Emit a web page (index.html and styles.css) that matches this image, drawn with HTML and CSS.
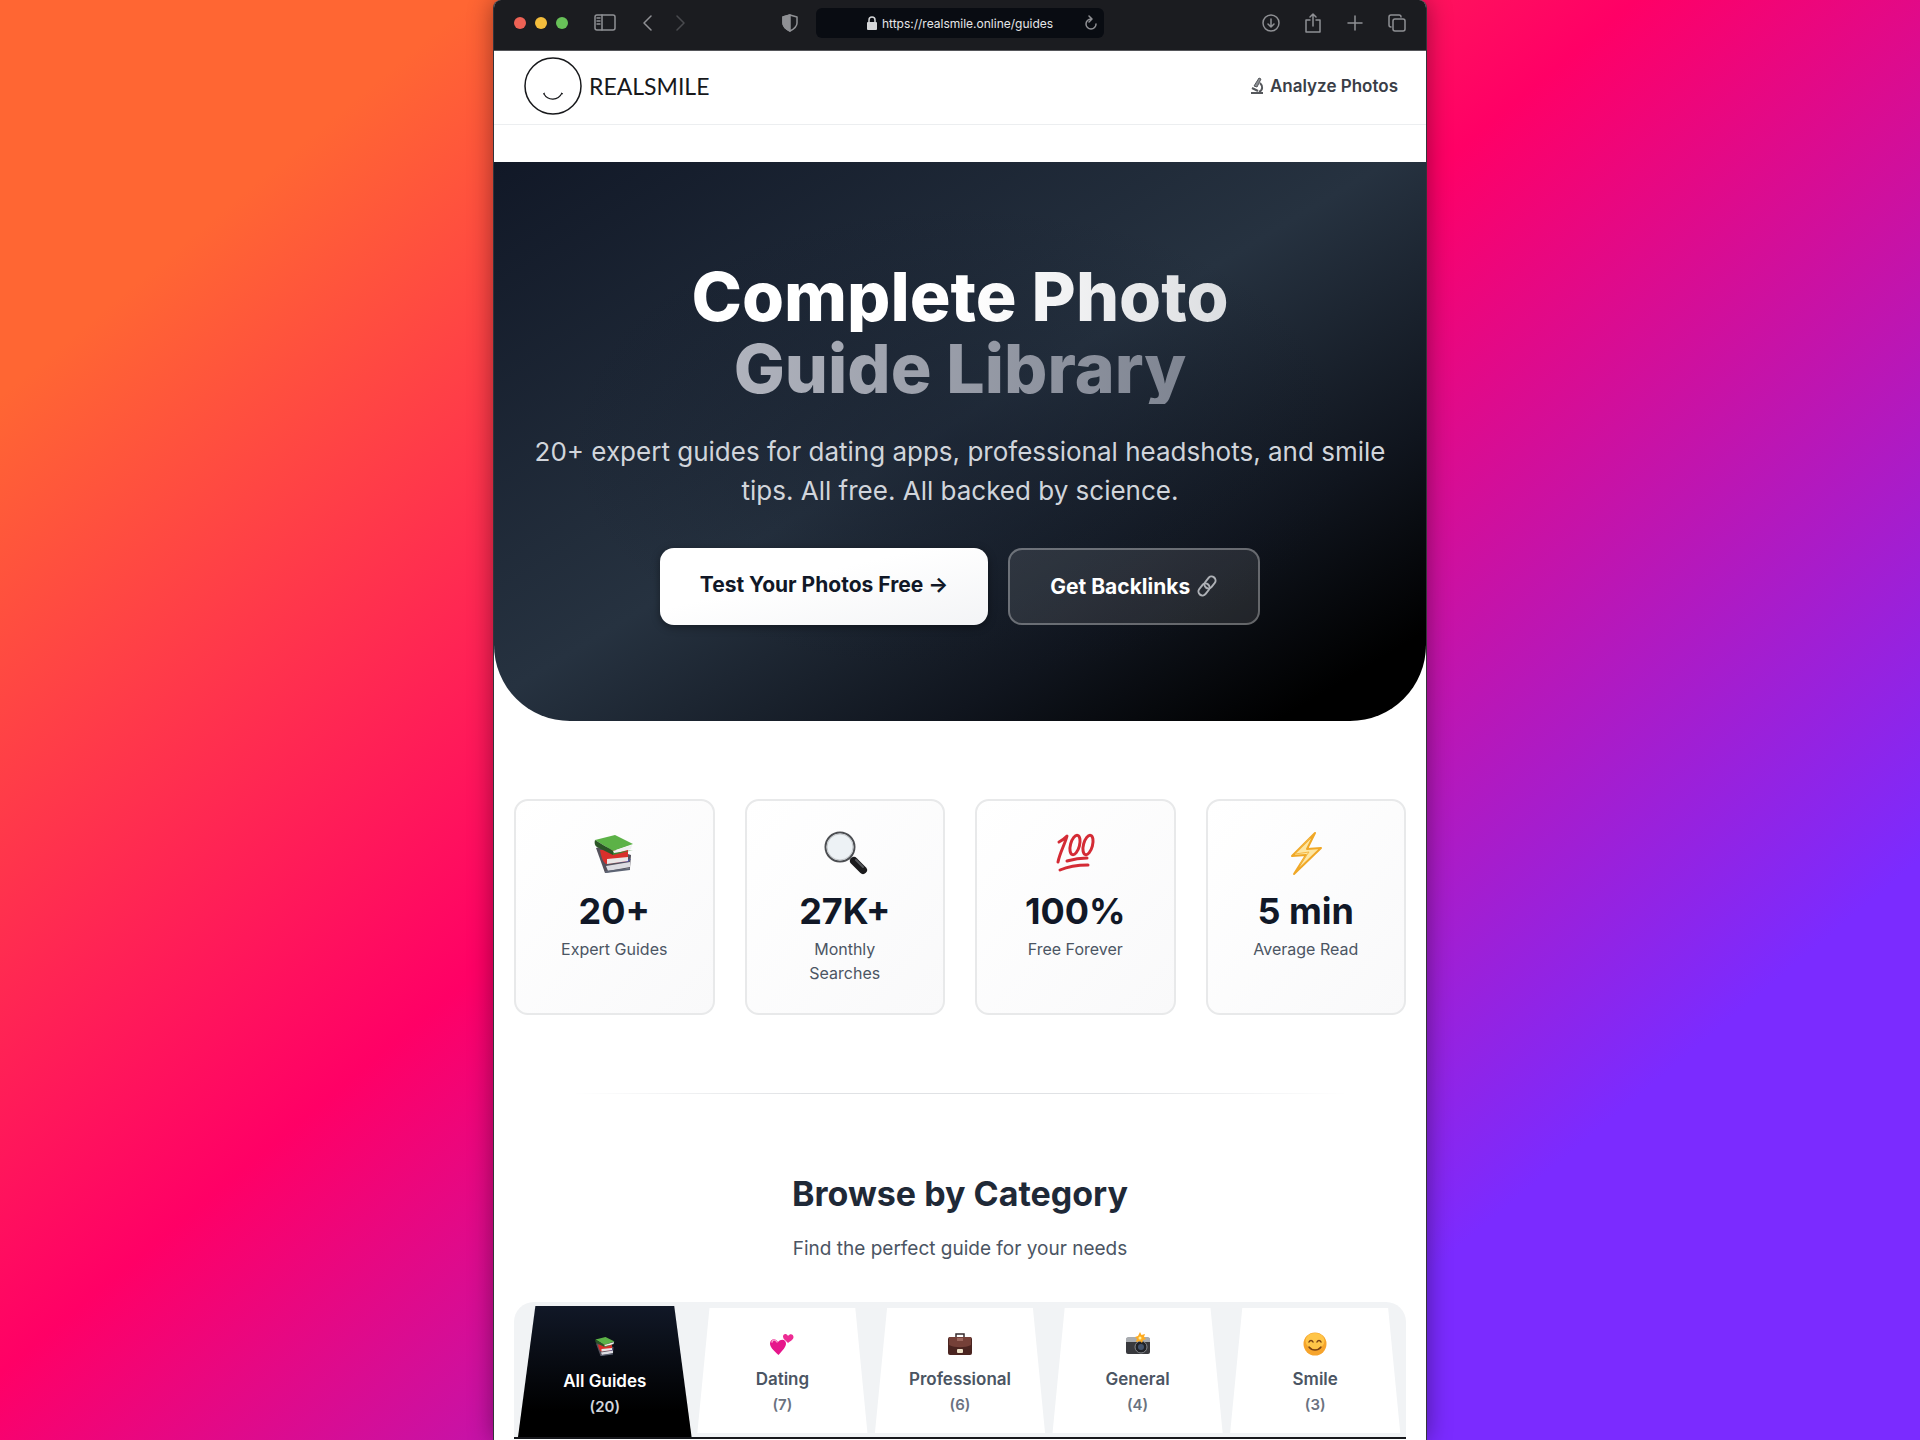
FILE: index.html
```html
<!DOCTYPE html>
<html lang="en">

<head>
    <meta charset="UTF-8">
    <meta name="viewport" content="width=device-width, initial-scale=1.0">
    <title>RealSmile - Guides</title>
    <link rel="stylesheet" href="styles.css">
</head>

<body>
    <!-- shared icons -->
    <svg class="sprite" aria-hidden="true">
        <symbol id="books" viewBox="0 0 48 48">
            <path d="M6 19l7-2 28 9-1 13-25 5z" fill="#55525c" />
            <path d="M16 37l24-4v5l-22 4z" fill="#dcdce2" />
            <path d="M14 34l24-1 3-3-25 3z" fill="#4d55a6" />
            <path d="M15 42l25-3v2l-24 3z" fill="#5d6474" />
            <path d="M10 21l28 0v11l-22 3c-4-3-5-9-6-14z" fill="#d92f2b" />
            <path d="M17 30l21-2v4l-21 3z" fill="#e9e6e6" />
            <path d="M5 11l20-5 18 9-20 7z" fill="#5cb247" />
            <path d="M5 11c-1 3 0 6 2 7l16 8v-4z" fill="#2b5526" />
            <path d="M23 22l19-6-1 4-17 5c-1-1-1-2-1-3z" fill="#efefef" />
            <path d="M43 15l-20 7v4l20-5-19 3-1-2z" fill="#3b8530" />
        </symbol>
        <symbol id="magnifier" viewBox="0 0 48 48">
            <path d="M28 28l5 5" stroke="#888" stroke-width="3" />
            <path d="M33 32l9 9" stroke="#1b1b1d" stroke-width="8" stroke-linecap="round" />
            <path d="M35 31l7 7" stroke="#55575b" stroke-width="2" stroke-linecap="round" />
            <circle cx="19" cy="18" r="14.500" fill="#edf2f5" stroke="#4c4e52" stroke-width="2" />
            <circle cx="19" cy="18" r="13" fill="none" stroke="#c4c8cb" />
        </symbol>
        <symbol id="hundred" viewBox="0 0 48 48">
            <g fill="none" stroke="#d42b35" stroke-linecap="round" stroke-linejoin="round">
                <path d="M8 13c4-2 6-4 8-6C14 15 9 23 7 33" stroke-width="3" />
                <ellipse cx="24" cy="16" rx="4.500" ry="10" transform="rotate(15 24 16)" stroke-width="3" />
                <ellipse cx="37" cy="16" rx="4.500" ry="10" transform="rotate(15 37 16)" stroke-width="3" />
                <path d="M16 32c7-2 13-3 20-3M9 41c9-4 18-5 28-5" stroke-width="3" />
            </g>
        </symbol>
        <symbol id="bolt" viewBox="0 0 48 48">
            <path d="M33 4L10 27l14-1-12 19 27-26-14 1z" fill="#fde6a3" stroke="#f0a827" stroke-width="2" stroke-linejoin="round" />
            <path d="M28 9L13 25l14-2-9 12" fill="none" stroke="#f5b945" stroke-width="1" />
        </symbol>
        <symbol id="hearts" viewBox="0 0 24 24">
            <path d="M8.500 23C3 18 0 15 0 11.500 0 7 5.500 5.500 8 10c3-4 8-2.500 8 1.500 0 3.500-3 6.500-7.500 11.500z" fill="#e6168b" />
            <path d="M18 11c-3-3-5-4-5-6.500C13 1.500 16.500 1 18 4c2-3 5.500-2 5.500 1 0 2.500-3 4-5.500 6z" fill="#ed2b93" />
            <path d="M2 10c1-3 4-2 5 0" stroke="#f99bcb" stroke-width="1.500" fill="none" stroke-linecap="round" />
        </symbol>
        <symbol id="briefcase" viewBox="0 0 24 24">
            <path d="M8 5V2h8v3" fill="none" stroke="#362b2d" stroke-width="1.500" />
            <rect x="0" y="5" width="24" height="18" rx="2" fill="#4a2420" />
            <path d="M1 5h22v8c-6 3-16 3-22 0z" fill="#754038" />
            <rect x="9" y="6" width="6" height="3" fill="#9b665c" />
            <rect x="9" y="17" width="6" height="4" rx="1" fill="#eee2c8" />
        </symbol>
        <symbol id="camera" viewBox="0 0 24 24">
            <rect y="6" width="24" height="16" rx="2" fill="#38393d" />
            <path d="M0 10V7c0-1 1-2 2-2h20c1 0 2 1 2 2v3z" fill="#a9acb0" />
            <circle cx="15" cy="15" r="6" fill="#202226" stroke="#85888d" />
            <circle cx="15" cy="15" r="3" fill="#43536b" />
            <path d="M14 0l1.500 3L19 2l-1 3 2 2-3 1-1 3-2-2-4 1 1-3-2-2 3-1z" fill="#ffab20" />
            <circle cx="14" cy="6" r="1.500" fill="#fff2a0" />
        </symbol>
        <symbol id="smiley" viewBox="0 0 24 24">
            <circle cx="12" cy="12" r="11.500" fill="#f6a42c" />
            <ellipse cx="12" cy="9" rx="9.500" ry="8" fill="#ffc548" />
            <path d="M6 10c1-2 3-2 4 0M14 10c1-2 3-2 4 0M6 15c3 4 9 4 12 0" fill="none" stroke="#7c4413" stroke-width="1.500" stroke-linecap="round" />
        </symbol>
    </svg>

    <div class="window">
        <div class="toolbar">
            <div class="toolbar-left">
                <div class="dots">
                    <span class="dot red"></span>
                    <span class="dot yellow"></span>
                    <span class="dot green"></span>
                </div>
                <button class="tool" aria-label="Sidebar">
                    <svg width="22" height="18" viewBox="0 0 22 18"><rect x="1" y="1" width="20" height="15" rx="2" /><path d="M8 1v15M3 4h3M3 7h3M3 10h3" /></svg>
                </button>
                <div class="history">
                    <button class="tool" aria-label="Back">
                        <svg width="10" height="16" viewBox="0 0 10 16"><path d="M9 1L2 8l7 7" /></svg>
                    </button>
                    <button class="tool dim" aria-label="Forward">
                        <svg width="10" height="16" viewBox="0 0 10 16"><path d="M1 1l7 7-7 7" /></svg>
                    </button>
                </div>
                <button class="tool shield" aria-label="Privacy report">
                    <svg width="16" height="18" viewBox="0 0 16 18"><path d="M8 1l7 2v6c0 4-3 6-7 8-4-2-7-4-7-8V3z" /><path class="solid" d="M8 1L1 3v6c0 4 3 6 7 8z" /></svg>
                </button>
            </div>
            <div class="address">
                <svg class="lock" width="10" height="14" viewBox="0 0 10 14"><rect y="6" width="10" height="8" rx="1" fill="#d5d6d8" /><path d="M2 7V4a3 3 0 0 1 6 0v3" fill="none" stroke="#d5d6d8" stroke-width="1.500" /></svg>
                <span>https://realsmile.online/guides</span>
                <button class="tool reload" aria-label="Reload">
                    <svg width="14" height="16" viewBox="0 0 14 16"><path d="M7 4a5 5 0 1 0 5 5M5 1l3 3-3 3" /></svg>
                </button>
            </div>
            <div class="toolbar-right">
                <button class="tool" aria-label="Downloads">
                    <svg width="18" height="20" viewBox="0 0 18 20"><circle cx="9" cy="10" r="8" /><path d="M9 6v8M6 11l3 3 3-3" /></svg>
                </button>
                <button class="tool" aria-label="Share">
                    <svg width="18" height="20" viewBox="0 0 18 20"><path d="M6 7H2v12h14V7h-4M9 13V1M6 4l3-3 3 3" /></svg>
                </button>
                <button class="tool" aria-label="New tab">
                    <svg width="18" height="20" viewBox="0 0 18 20"><path d="M9 3v14M2 10h14" /></svg>
                </button>
                <button class="tool" aria-label="Tabs">
                    <svg width="18" height="20" viewBox="0 0 18 20"><rect x="5" y="6" width="12" height="12" rx="2" /><path d="M3 14c-1 0-2-1-2-2V4c0-1 1-2 2-2h8c1 0 2 1 2 2" /></svg>
                </button>
            </div>
        </div>

        <header class="header">
            <a class="logo" href="#">
                <svg width="58" height="58" viewBox="0 0 58 58" fill="none" stroke="#17181b"><circle cx="29" cy="29" r="28" stroke-width="1.500" /><path d="M20 37c4 7 14 7 18-1" stroke-width="1.200" /><path d="M19 37l2-1M37 36l2 1" /></svg>
                REALSMILE
            </a>
            <a class="analyze" href="#">
                <svg width="14" height="18" viewBox="0 0 14 18" fill="none" stroke="#55585c"><path d="M9 1l2 1-4 8-3-1z" fill="#898d91" /><path d="M10 6c3 3 3 7-1 9M2 11l6 3M1 16h12" stroke-width="2" /></svg>
                Analyze Photos
            </a>
        </header>

        <main>
            <section class="hero">
                <h1><span class="line">Complete Photo</span> <span class="line muted">Guide Library</span></h1>
                <p>20+ expert guides for dating apps, professional headshots, and smile tips. All free. All backed by science.</p>
                <div class="hero-buttons">
                    <a class="btn btn-light" href="#">Test Your Photos Free →</a>
                    <a class="btn btn-glass" href="#">Get Backlinks
                        <svg width="22" height="24" viewBox="0 0 22 24" fill="none" stroke="#aeb1b6" stroke-width="2"><rect x="10" y="2" width="8" height="13" rx="4" transform="rotate(38 14 8.500)" /><rect x="4" y="9" width="8" height="13" rx="4" transform="rotate(38 8 15.500)" /></svg>
                    </a>
                </div>
            </section>

            <section class="stats">
                <div class="stat">
                    <svg><use href="#books" /></svg>
                    <div class="stat-number">20+</div>
                    <div class="stat-label">Expert Guides</div>
                </div>
                <div class="stat">
                    <svg><use href="#magnifier" /></svg>
                    <div class="stat-number">27K+</div>
                    <div class="stat-label">Monthly Searches</div>
                </div>
                <div class="stat">
                    <svg><use href="#hundred" /></svg>
                    <div class="stat-number">100%</div>
                    <div class="stat-label">Free Forever</div>
                </div>
                <div class="stat">
                    <svg><use href="#bolt" /></svg>
                    <div class="stat-number">5 min</div>
                    <div class="stat-label">Average Read</div>
                </div>
            </section>

            <section class="browse">
                <h2>Browse by Category</h2>
                <p>Find the perfect guide for your needs</p>
                <div class="tabs">
                    <button class="tab active">
                        <svg><use href="#books" /></svg>
                        <span class="tab-name">All Guides</span>
                        <span class="tab-count">(20)</span>
                    </button>
                    <button class="tab">
                        <svg><use href="#hearts" /></svg>
                        <span class="tab-name">Dating</span>
                        <span class="tab-count">(7)</span>
                    </button>
                    <button class="tab">
                        <svg><use href="#briefcase" /></svg>
                        <span class="tab-name">Professional</span>
                        <span class="tab-count">(6)</span>
                    </button>
                    <button class="tab">
                        <svg><use href="#camera" /></svg>
                        <span class="tab-name">General</span>
                        <span class="tab-count">(4)</span>
                    </button>
                    <button class="tab">
                        <svg><use href="#smiley" /></svg>
                        <span class="tab-name">Smile</span>
                        <span class="tab-count">(3)</span>
                    </button>
                </div>
            </section>
        </main>
    </div>
</body>

</html>
```
FILE: styles.css
```css
* {
    box-sizing: border-box;
}

body {
    font-family: Inter, "Liberation Sans", sans-serif;
    margin: 0;
    min-height: 100vh;
    background: linear-gradient(140deg, #ff6633 13%, #ff0066 45%, #7b2bff 81%);
    color: #111827;
}

a {
    color: inherit;
    text-decoration: none;
}

button {
    font-family: inherit;
    border: none;
    padding: 0;
    cursor: pointer;
}

.sprite {
    display: none;
}

.window {
    max-width: 934px;
    min-height: 100vh;
    margin: 0 auto;
    background-color: #fff;
    border: 1px solid #34343a;
    border-width: 0 1px;
    border-radius: 8px 8px 0 0;
    box-shadow: 0 0 24px rgba(0, 0, 0, 0.4);
    overflow: hidden;
}

/* browser toolbar */
.toolbar {
    display: grid;
    grid-template-columns: 1fr 288px 1fr;
    align-items: center;
    padding: 8px 20px 12px 20px;
    background-color: #1b1c20;
    border-bottom: 1px solid #55565a;
}

.toolbar-left,
.toolbar-right,
.dots,
.history {
    display: flex;
    align-items: center;
}

.toolbar-left {
    padding-right: 18px;
}

.dots {
    gap: 9px;
    margin-right: 26px;
}

.dot {
    width: 12px;
    height: 12px;
    border-radius: 50%;
}

.red {
    background-color: #ee6255;
}

.yellow {
    background-color: #f4bd3c;
}

.green {
    background-color: #68c158;
}

.history {
    gap: 24px;
    margin-left: 26px;
}

.tool {
    display: flex;
    background: none;
}

.tool svg {
    fill: none;
    stroke: #8f9094;
    stroke-width: 1.5;
    stroke-linecap: round;
    stroke-linejoin: round;
}

.tool .solid {
    fill: #8f9094;
}

.dim {
    opacity: 0.4;
}

.shield {
    margin-left: auto;
}

.address {
    display: flex;
    align-items: center;
    justify-content: center;
    position: relative;
    gap: 5px;
    height: 30px;
    border-radius: 6px;
    background-color: #090c12;
    color: #e6e6e8;
    font-size: 12px;
}

.reload {
    position: absolute;
    right: 6px;
}

.toolbar-right {
    justify-content: flex-end;
    gap: 24px;
}

/* site header */
.header {
    display: flex;
    justify-content: space-between;
    align-items: center;
    padding: 6px 28px 9px 30px;
    border-bottom: 1px solid #eceef0;
}

.logo {
    display: flex;
    align-items: center;
    gap: 7px;
    font-family: Lato, sans-serif;
    font-size: 23px;
    color: #17181b;
}

.analyze {
    display: flex;
    align-items: center;
    gap: 6px;
    font-size: 17px;
    font-weight: 600;
    color: #3a3e47;
}

/* hero */
.hero {
    margin-top: 37px;
    padding: 98px 36px 96px;
    text-align: center;
    border-radius: 0 0 76px 76px;
    background:
        radial-gradient(ellipse at center, rgba(17, 24, 39, 0.4), transparent 60%),
        linear-gradient(to bottom right, #111827, #263240 48%, #10151e 74%, #000 92%);
}

.hero h1 {
    margin: 0;
    font-size: 68px;
    line-height: 72px;
    font-weight: 800;
}

.line {
    display: block;
    width: fit-content;
    margin: 0 auto;
    background: linear-gradient(to right, #fff 50%, #dcdee1);
    -webkit-background-clip: text;
    background-clip: text;
    color: transparent;
}

.muted {
    background-image: linear-gradient(to right, #b0b3bd, #7f8592);
}

.hero p {
    margin: 28px 0 38px;
    font-size: 26px;
    line-height: 39px;
    color: #d1d5db;
}

.hero-buttons {
    display: flex;
    justify-content: center;
    gap: 20px;
}

.btn {
    display: flex;
    gap: 6px;
    padding: 24px 40px;
    border-radius: 14px;
    font-size: 21px;
    line-height: 25px;
    font-weight: 700;
}

.btn-light {
    background: linear-gradient(to bottom right, #fff 40%, #f3f4f6);
    box-shadow: 0 2px 8px rgba(0, 0, 0, 0.4);
}

.btn-glass {
    color: #fff;
    background-color: rgba(255, 255, 255, 0.1);
    border: 2px solid rgba(255, 255, 255, 0.3);
}

/* stats */
.stats {
    display: grid;
    grid-template-columns: repeat(4, 1fr);
    gap: 30px;
    padding: 78px 20px;
}

.stat {
    padding: 28px 38px;
    text-align: center;
    border: 2px solid #e8e9ea;
    border-radius: 14px;
    background: linear-gradient(to bottom right, #fff, #f9f9fa);
}

.stat svg {
    display: block;
    width: 48px;
    height: 48px;
    margin: 0 auto 10px;
}

.stat-number {
    font-size: 36px;
    line-height: 48px;
    font-weight: 700;
}

.stat-label {
    margin-top: 2px;
    font-size: 16px;
    line-height: 24px;
    color: #4b5563;
}

/* categories */
.browse {
    padding: 0 20px;
    text-align: center;
}

.browse::before {
    content: "";
    display: block;
    height: 1px;
    margin: 0 58px 78px;
    background: linear-gradient(to right, transparent, #e0e2e5 30%, #e0e2e5 70%, transparent);
}

.browse h2 {
    margin: 0;
    font-size: 34px;
    line-height: 44px;
    font-weight: 700;
    color: #1f2937;
}

.browse p {
    margin: 18px 0 38px;
    font-size: 19px;
    line-height: 30px;
    color: #4b5563;
}

.tabs {
    display: grid;
    grid-template-columns: repeat(5, 1fr);
    align-items: start;
    gap: 4px;
    padding: 4px 4px 0;
    border-radius: 20px 20px 0 0;
    border-bottom: 2px solid #17181c;
    background-color: #f1f3f5;
}

.tab {
    display: flex;
    flex-direction: column;
    align-items: center;
    margin-top: 2px;
    padding: 24px 4px 15px;
    background-color: #fff;
    color: #4b5563;
    clip-path: polygon(8% 0, 92% 0, 99% 100%, 1% 100%);
}

.tab svg {
    width: 24px;
    height: 24px;
    margin-bottom: 10px;
}

.tab-name {
    font-size: 17px;
    line-height: 26px;
    font-weight: 600;
}

.tab-count {
    font-size: 15px;
    line-height: 26px;
    font-weight: 600;
    color: #6b7280;
}

.active {
    margin-top: 0;
    padding: 28px 4px 17px;
    background: linear-gradient(#111827, #000 80%);
    color: #fff;
    clip-path: polygon(10% 0, 90% 0, 100% 100%, 0 100%);
}

.active .tab-count {
    color: #d1d5db;
}
```
